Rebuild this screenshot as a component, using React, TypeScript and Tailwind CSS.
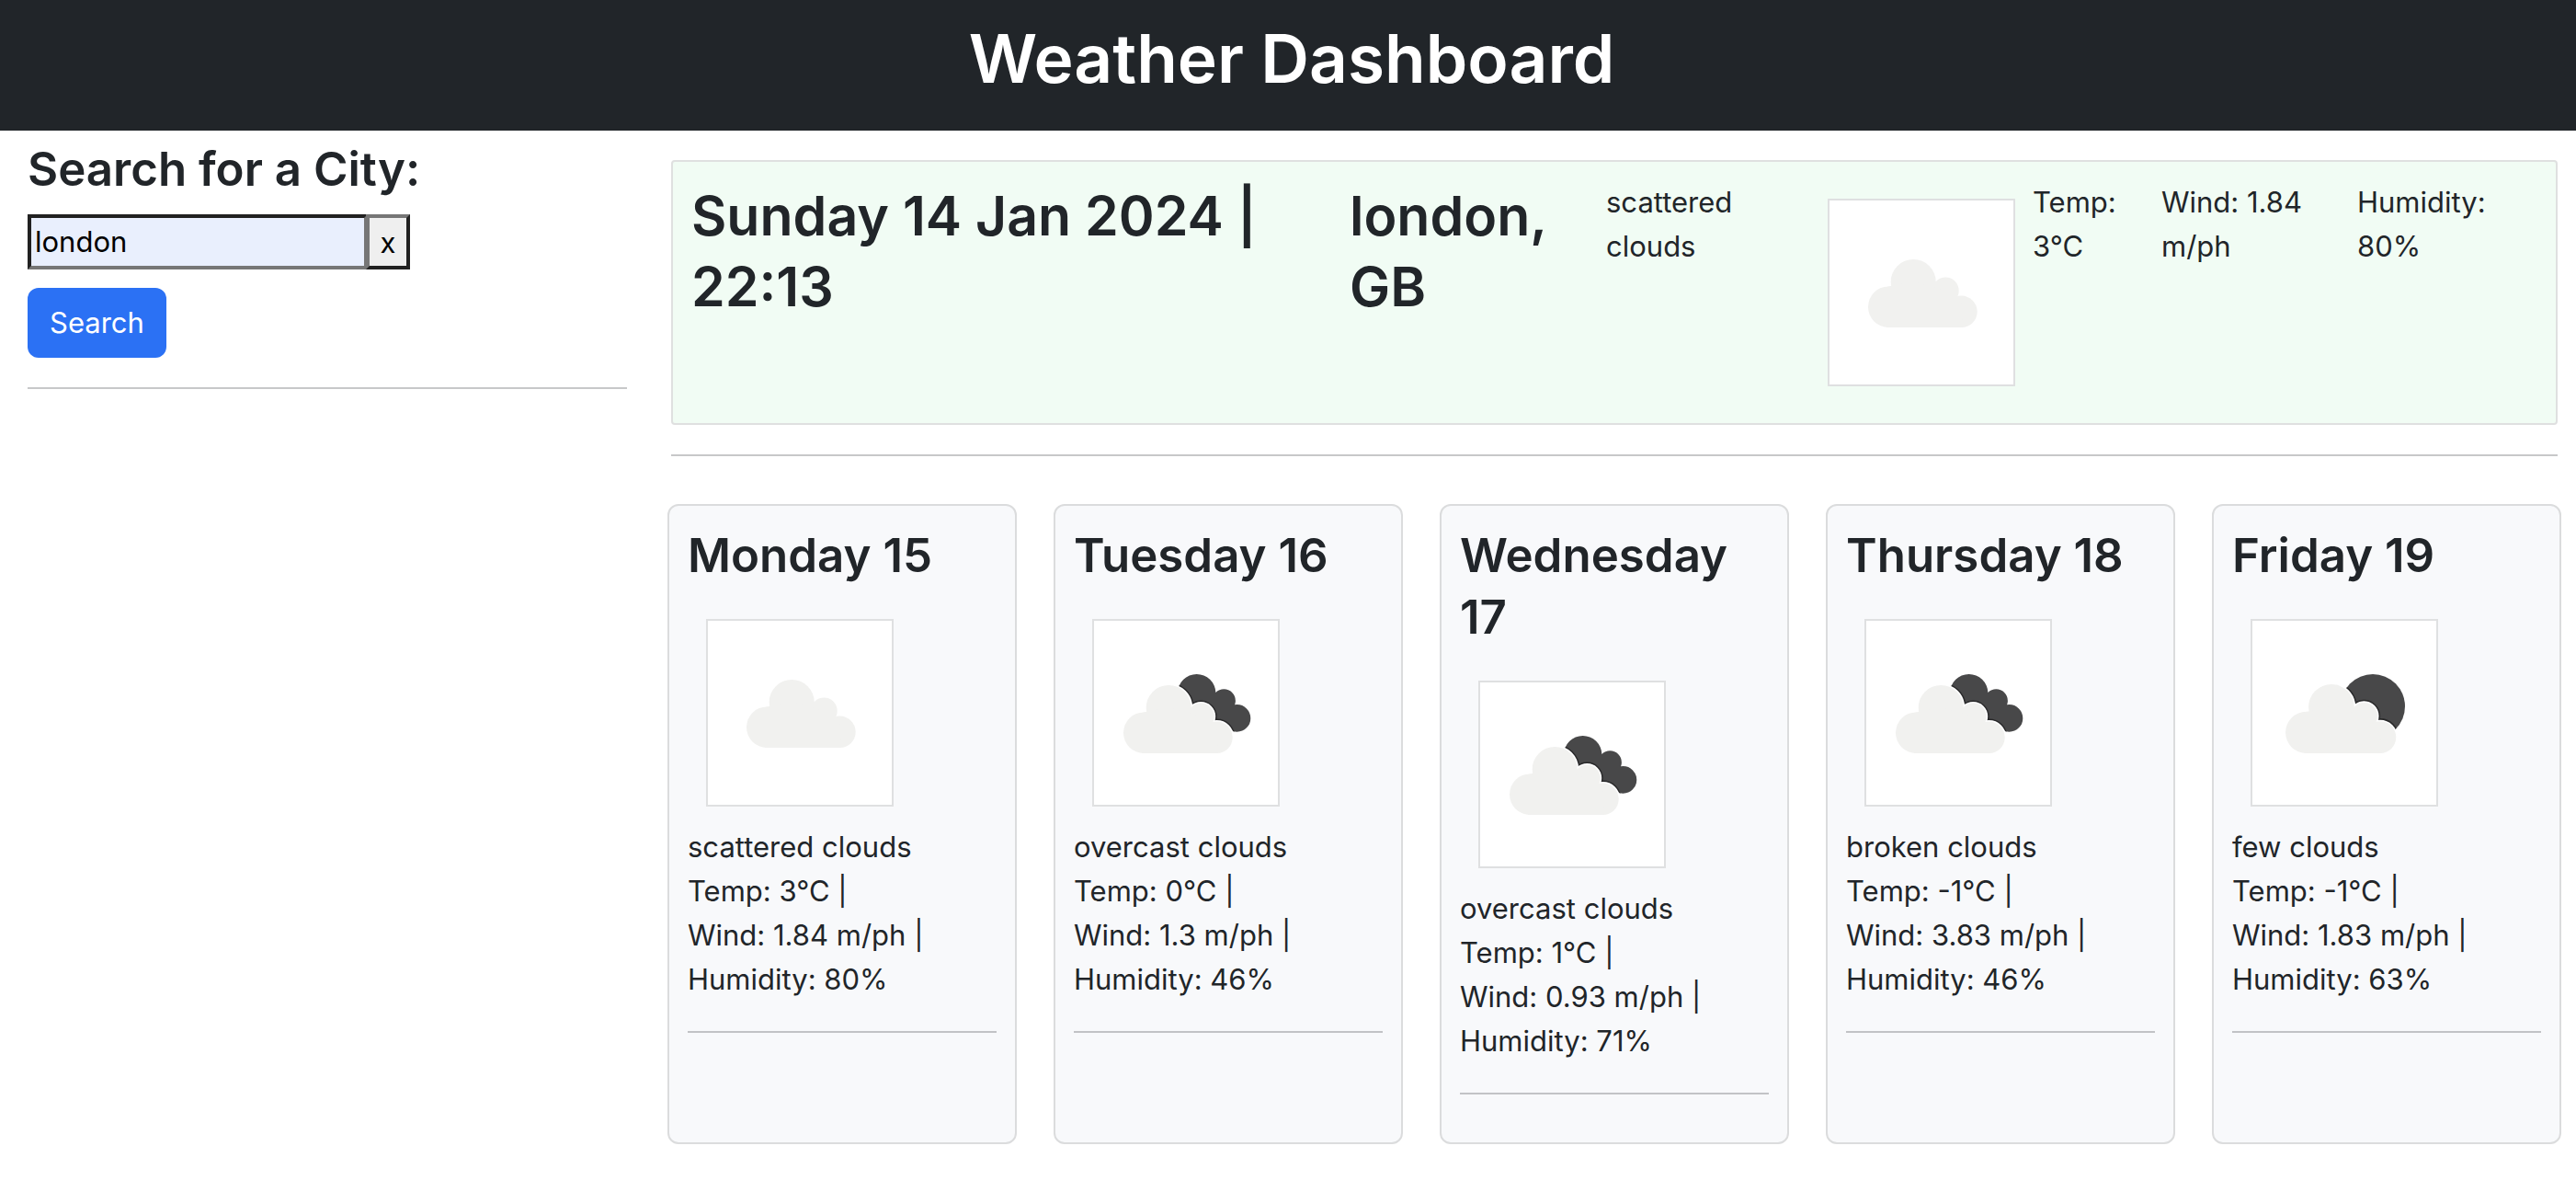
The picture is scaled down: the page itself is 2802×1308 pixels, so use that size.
import React, { useId, useState } from "react";

type IconKind = "scattered" | "broken" | "few";

type Day = {
  name: string;
  icon: IconKind;
  summary: string;
  temp: string;
  wind: string;
  humidity: string;
};

const days: Day[] = [
  { name: "Monday 15", icon: "scattered", summary: "scattered clouds", temp: "3", wind: "1.84", humidity: "80" },
  { name: "Tuesday 16", icon: "broken", summary: "overcast clouds", temp: "0", wind: "1.3", humidity: "46" },
  { name: "Wednesday 17", icon: "broken", summary: "overcast clouds", temp: "1", wind: "0.93", humidity: "71" },
  { name: "Thursday 18", icon: "broken", summary: "broken clouds", temp: "-1", wind: "3.83", humidity: "46" },
  { name: "Friday 19", icon: "few", summary: "few clouds", temp: "-1", wind: "1.83", humidity: "63" },
];

function CloudShape() {
  return (
    <>
      <circle cx="64.3" cy="115.7" r="22.3" />
      <circle cx="91.2" cy="88.5" r="24.5" />
      <circle cx="126.3" cy="98" r="14.4" />
      <circle cx="143.5" cy="120.8" r="17.2" />
      <path d="M62 138 L62 94 L90 88 L126 98 L143.5 112 L145 138 Z" />
    </>
  );
}

const frontCloud: Record<IconKind, string> = {
  scattered: "translate(0 0)",
  broken: "translate(-10 6)",
  few: "translate(-6.5 4.2) scale(1.013)",
};

function WeatherIcon({ kind, label }: { kind: IconKind; label: string }) {
  const clip = useId();
  return (
    <svg
      viewBox="0 0 200 200"
      role="img"
      aria-label={label}
      className="box-content size-[200px] shrink-0 border-2 border-[#dfe0e1] bg-white"
    >
      {kind !== "scattered" && (
        <>
          <clipPath id={clip}>
            {kind === "few" ? (
              <circle cx="131" cy="93" r="35" />
            ) : (
              <>
                <circle cx="111.7" cy="78.7" r="20.7" />
                <circle cx="141.3" cy="86.9" r="12.6" />
                <circle cx="155.5" cy="105.9" r="14.8" />
                <path d="M111 78 L141 87 L155 104 L152 119 L108 116 Z" />
              </>
            )}
          </clipPath>
          <g clipPath={`url(#${clip})`}>
            <rect width="200" height="200" fill="#484849" />
            <g transform={frontCloud[kind]} fill="#29292a" stroke="#29292a" strokeWidth="6">
              <CloudShape />
            </g>
          </g>
          <g transform={frontCloud[kind]} fill="#fff" stroke="#fff" strokeWidth="3">
            <CloudShape />
          </g>
        </>
      )}
      <g transform={frontCloud[kind]} fill="#f1f1ef">
        <CloudShape />
      </g>
    </svg>
  );
}

function Rule() {
  return <hr className="my-8 border-0 border-t-2 border-[#212529]/25" />;
}

function SearchPanel() {
  const [city, setCity] = useState("london");
  return (
    <aside className="pt-2">
      <form onSubmit={(e) => e.preventDefault()}>
        <label htmlFor="city" className="mb-4 block text-[51px] leading-[67px] font-semibold">
          Search for a City:
        </label>
        <div className="flex h-[60px]">
          <input
            id="city"
            type="text"
            value={city}
            onChange={(e) => setCity(e.target.value)}
            className="w-[370px] border-4 border-t-[#212121] border-r-[#767676] border-b-[#767676] border-l-[#212121] bg-[#e9effd] px-1 text-black"
          />
          <button
            type="button"
            aria-label="Clear city"
            onClick={() => setCity("")}
            className="-ml-0.5 w-12 border-4 border-t-[#767676] border-r-[#212121] border-b-[#212121] border-l-[#767676] bg-[#efefef] leading-none text-black"
          >
            x
          </button>
        </div>
        <button type="submit" className="mt-5 h-[76px] rounded-xl bg-[#2b71f4] px-6 text-white">
          Search
        </button>
      </form>
      <Rule />
    </aside>
  );
}

function CurrentWeather() {
  return (
    <section className="grid grid-cols-[716fr_279fr_221fr_243fr_140fr_213fr_196fr] rounded-sm border-2 border-[#dfe0e0] bg-[#f1fcf4] p-5">
      <h2 className="pr-6 text-[59px] leading-[77px] font-semibold">Sunday 14 Jan 2024 | 22:13</h2>
      <h2 className="pr-6 text-[59px] leading-[77px] font-semibold">london, GB</h2>
      <p className="pr-6">scattered clouds</p>
      <div className="py-5 pl-5">
        <WeatherIcon kind="scattered" label="scattered clouds" />
      </div>
      <p className="pr-6">Temp: 3°C</p>
      <p className="pr-6">Wind: 1.84 m/ph</p>
      <p className="pr-6">Humidity: 80%</p>
    </section>
  );
}

function DayCard({ day }: { day: Day }) {
  return (
    <article className="rounded-xl border-2 border-[#dbdcdd] bg-[#f8f9fb] p-5">
      <h3 className="mb-4 text-[51px] leading-[67px] font-semibold">{day.name}</h3>
      <div className="p-5">
        <WeatherIcon kind={day.icon} label={day.summary} />
      </div>
      <p>{day.summary}</p>
      <p>Temp: {day.temp}°C |</p>
      <p>Wind: {day.wind} m/ph |</p>
      <p>Humidity: {day.humidity}%</p>
      <Rule />
    </article>
  );
}

export default function App() {
  return (
    <div className="min-h-screen bg-white font-['Inter',sans-serif] text-[31px] leading-[48px] text-[#212529]">
      <header className="bg-[#212529] pt-4 pb-[30px] pl-2 text-center text-white">
        <h1 className="text-[73px] leading-[96px] font-semibold">Weather Dashboard</h1>
      </header>
      <div className="grid grid-cols-[652fr_2052fr] gap-12 pr-5 pl-[30px]">
        <SearchPanel />
        <main className="pt-8">
          <CurrentWeather />
          <Rule />
          <section className="-mx-1 mt-[52px] grid grid-cols-5 gap-10">
            {days.map((day) => (
              <DayCard key={day.name} day={day} />
            ))}
          </section>
        </main>
      </div>
    </div>
  );
}
